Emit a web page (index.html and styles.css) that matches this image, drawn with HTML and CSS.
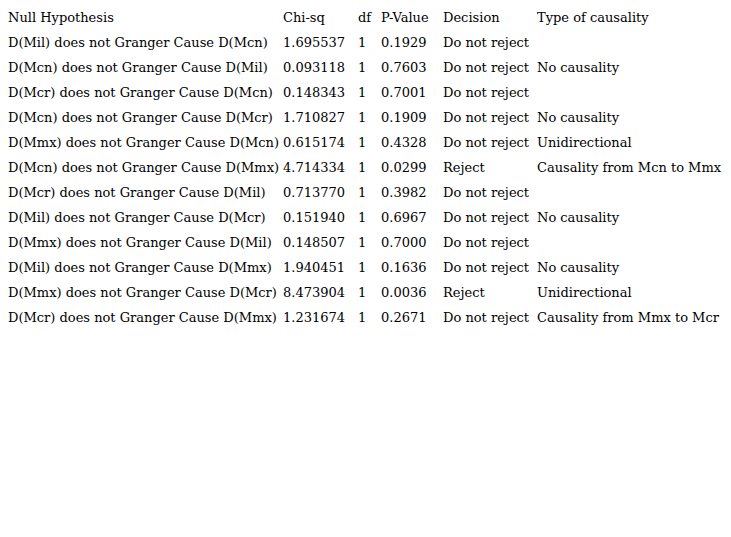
FILE: index.html
```html
<!DOCTYPE html>
<html>
<head>
<meta charset="utf-8">
<link rel="stylesheet" href="styles.css">
</head>
<body>
<table class="results">
<colgroup>
<col class="c-hyp"><col class="c-chi"><col class="c-df"><col class="c-p"><col class="c-dec"><col class="c-type">
</colgroup>
<tr><td>Null Hypothesis</td><td>Chi-sq</td><td>df</td><td>P-Value</td><td>Decision</td><td>Type of causality</td></tr>
<tr><td>D(Mil) does not Granger Cause D(Mcn)</td><td>1.695537</td><td>1</td><td>0.1929</td><td>Do not reject</td><td></td></tr>
<tr><td>D(Mcn) does not Granger Cause D(Mil)</td><td>0.093118</td><td>1</td><td>0.7603</td><td>Do not reject</td><td>No causality</td></tr>
<tr><td>D(Mcr) does not Granger Cause D(Mcn)</td><td>0.148343</td><td>1</td><td>0.7001</td><td>Do not reject</td><td></td></tr>
<tr><td>D(Mcn) does not Granger Cause D(Mcr)</td><td>1.710827</td><td>1</td><td>0.1909</td><td>Do not reject</td><td>No causality</td></tr>
<tr><td>D(Mmx) does not Granger Cause D(Mcn)</td><td>0.615174</td><td>1</td><td>0.4328</td><td>Do not reject</td><td>Unidirectional</td></tr>
<tr><td>D(Mcn) does not Granger Cause D(Mmx)</td><td>4.714334</td><td>1</td><td>0.0299</td><td>Reject</td><td>Causality from Mcn to Mmx</td></tr>
<tr><td>D(Mcr) does not Granger Cause D(Mil)</td><td>0.713770</td><td>1</td><td>0.3982</td><td>Do not reject</td><td></td></tr>
<tr><td>D(Mil) does not Granger Cause D(Mcr)</td><td>0.151940</td><td>1</td><td>0.6967</td><td>Do not reject</td><td>No causality</td></tr>
<tr><td>D(Mmx) does not Granger Cause D(Mil)</td><td>0.148507</td><td>1</td><td>0.7000</td><td>Do not reject</td><td></td></tr>
<tr><td>D(Mil) does not Granger Cause D(Mmx)</td><td>1.940451</td><td>1</td><td>0.1636</td><td>Do not reject</td><td>No causality</td></tr>
<tr><td>D(Mmx) does not Granger Cause D(Mcr)</td><td>8.473904</td><td>1</td><td>0.0036</td><td>Reject</td><td>Unidirectional</td></tr>
<tr><td>D(Mcr) does not Granger Cause D(Mmx)</td><td>1.231674</td><td>1</td><td>0.2671</td><td>Do not reject</td><td>Causality from Mmx to Mcr</td></tr>
</table>
</body>
</html>
```
FILE: styles.css
```css
html, body {
  margin: 0;
  padding: 0;
  background: #fff;
}
body {
  padding: 5px 0 0 8px;
  font-family: "DejaVu Serif", serif;
  font-size: 13px;
  color: #000;
}
.results {
  border-collapse: collapse;
  table-layout: fixed;
  width: 709px;
}
.results td {
  padding: 0;
  height: 25px;
  line-height: 25px;
  white-space: nowrap;
  vertical-align: middle;
}
.c-hyp { width: 275px; }
.c-chi { width: 75px; }
.c-df { width: 23px; }
.c-p { width: 62px; }
.c-dec { width: 94px; }
.c-type { width: 180px; }
```
